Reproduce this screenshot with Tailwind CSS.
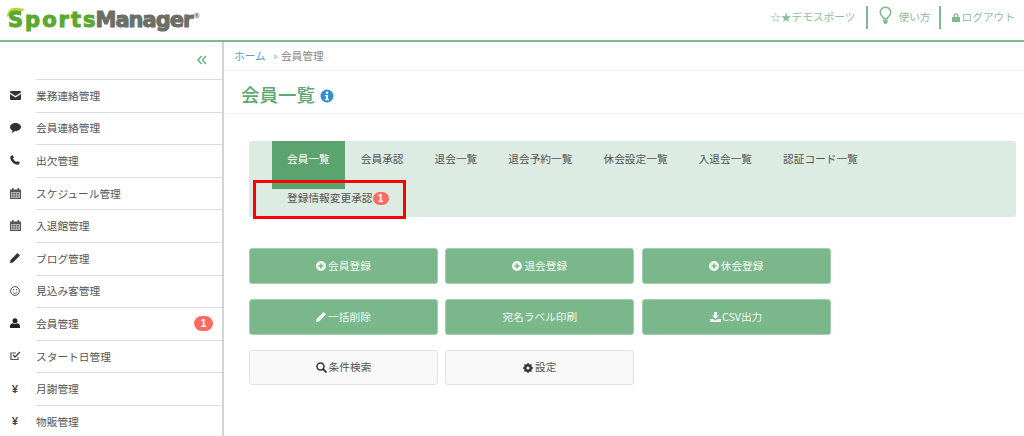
<!DOCTYPE html>
<html lang="ja">
<head>
  <meta charset="UTF-8" />
  <meta name="viewport" content="width=device-width, initial-scale=1.0"/>
  <title>会員一覧 - SportsManager</title>
  <script src="https://cdn.jsdelivr.net/npm/@tailwindcss/browser@4"></script>
</head>
<body class="h-screen overflow-hidden bg-white font-['Noto_Sans_CJK_JP','Noto_Sans',sans-serif] text-[10.7px] text-[#555]">
  <!-- header -->
  <header class="flex h-[42px] items-center justify-between border-b-2 border-[#80b98f]">
    <div class="relative ml-[8px] flex h-[30px] items-center font-['DejaVu_Sans',sans-serif] text-[21px] font-bold leading-none">
      <svg class="absolute left-[-1px] top-[2px]" width="18" height="10" viewBox="0 0 18 10"><path d="M0 10C0 3 5 0 11 1c3 0 5 1 7 1-3 2-5 4-8 5-4 1-7 1-10 3z" fill="#b5d334"/></svg>
      <span class="relative tracking-[2px] text-[#5aa92f] [-webkit-text-stroke:1px_#5aa92f]">Sports</span><span class="ml-[-2px] tracking-[-1px] text-[#6c6e68] [-webkit-text-stroke:1px_#6c6e68]">Manager</span><span class="mb-[8px] ml-[1px] text-[7px] text-[#6c6e68]">®</span>
    </div>
    <div class="mr-[9px] flex items-center pb-[6px] text-[#8dbd9b]">
      <span>☆★デモスポーツ</span>
      <span class="ml-[11px] h-[23px] w-[2px] bg-[#80b98f]"></span>
      <svg class="ml-[11px] mb-[3px]" width="13" height="19" viewBox="0 0 13 19"><path d="M6.5 1.2a5.2 5.2 0 0 0-3 9.4c.6.5.9 1.1 1 1.9h4c.1-.8.4-1.4 1-1.9a5.2 5.2 0 0 0-3-9.4z" fill="none" stroke="#7fb98f" stroke-width="1.5"/><path d="M4.3 13.5h4.4v2.2a2.2 2.2 0 0 1-4.4 0z" fill="#7fb98f"/></svg>
      <span class="ml-[6px] text-[10.7px]">使い方</span>
      <span class="ml-[8px] h-[23px] w-[2px] bg-[#80b98f]"></span>
      <svg class="ml-[11px]" width="8" height="9" viewBox="0 0 8 9"><path d="M1.5 4V2.8a2.5 2.5 0 0 1 5 0V4H8v5H0V4zm1.300 0h2.400V2.800a1.200 1.200 0 0 0-2.400 0z" fill="#7fb98f"/></svg>
      <span class="ml-[2px]">ログアウト</span>
    </div>
  </header>

  <div class="flex h-[394px]">
    <!-- sidebar -->
    <aside class="w-[224px] shrink-0 overflow-hidden border-r-2 border-[#d3d3d8]">
      <div class="flex h-[37px] items-center justify-end pr-[15px]">
        <svg class="mb-[2px]" width="10" height="10" viewBox="0 0 10 10"><path d="M4.500 1 1 5l3.500 4M9 1 5.500 5 9 9" fill="none" stroke="#6fb083" stroke-width="1.500"/></svg>
      </div>
      <nav>
        <a class="flex h-[32.6px] items-center">
          <span class="flex w-[36px] justify-center pr-[6px]"><svg width="11" height="9" viewBox="0 0 11 9"><path d="M1 0h9a1 1 0 0 1 1 1v.6L5.500 5 0 1.600V1a1 1 0 0 1 1-1zM0 3l5.500 3.400L11 3v5a1 1 0 0 1-1 1H1a1 1 0 0 1-1-1z" fill="#333"/></svg></span>
          <span class="flex h-full flex-1 items-center border-t-[1.5px] border-[#ddd]">業務連絡管理</span>
        </a>
        <a class="flex h-[32.6px] items-center">
          <span class="flex w-[36px] justify-center pr-[6px]"><svg width="11" height="10" viewBox="0 0 11 10"><path d="M5.500 0C8.500 0 11 1.700 11 4S8.500 8 5.500 8H5C4 9 2.800 9.600 1.500 10c.6-.8.900-1.500 1-2.400C1 6.900 0 5.600 0 4c0-2.300 2.500-4 5.500-4z" fill="#333"/></svg></span>
          <span class="flex h-full flex-1 items-center border-t-[1.5px] border-[#ddd]">会員連絡管理</span>
        </a>
        <a class="flex h-[32.6px] items-center">
          <span class="flex w-[36px] justify-center pr-[6px]"><svg width="10" height="10" viewBox="0 0 10 10"><path d="M2.500 0 4 2.600 3 3.600c.5 1.300 2 2.900 3.400 3.400l1-1L10 7.500 8.500 9.700C4 10.300-.3 5.500.3 1.500z" fill="#333"/></svg></span>
          <span class="flex h-full flex-1 items-center border-t-[1.5px] border-[#ddd]">出欠管理</span>
        </a>
        <a class="flex h-[32.6px] items-center">
          <span class="flex w-[36px] justify-center pr-[6px]"><svg width="11" height="11" viewBox="0 0 11 11"><path d="M0 1.500h2V0h1.500v1.500h4V0H9v1.500h2V11H0zM1 4v6h9V4zm1 1h1.500v1.200H2zm2.500 0H6v1.200H4.500zM7 5h1.500v1.200H7zM2 7.500h1.500v1.200H2zm2.500 0H6v1.200H4.500zm2.500 0h1.500v1.200H7z" fill="#555" fill-rule="evenodd"/><path d="M1 4h9v6H1z" fill="#555" opacity=".45"/></svg></span>
          <span class="flex h-full flex-1 items-center border-t-[1.5px] border-[#ddd]">スケジュール管理</span>
        </a>
        <a class="flex h-[32.6px] items-center">
          <span class="flex w-[36px] justify-center pr-[6px]"><svg width="11" height="11" viewBox="0 0 11 11"><path d="M0 1.500h2V0h1.500v1.500h4V0H9v1.500h2V11H0zM1 4v6h9V4zm1 1h1.500v1.200H2zm2.500 0H6v1.200H4.500zM7 5h1.500v1.200H7zM2 7.500h1.500v1.200H2zm2.500 0H6v1.200H4.500zm2.500 0h1.500v1.200H7z" fill="#555" fill-rule="evenodd"/><path d="M1 4h9v6H1z" fill="#555" opacity=".45"/></svg></span>
          <span class="flex h-full flex-1 items-center border-t-[1.5px] border-[#ddd]">入退館管理</span>
        </a>
        <a class="flex h-[32.6px] items-center">
          <span class="flex w-[36px] justify-center pr-[6px]"><svg width="10" height="10" viewBox="0 0 10 10"><path d="M7.500 0 10 2.500 3 9.500 0 10l.5-3z" fill="#333"/></svg></span>
          <span class="flex h-full flex-1 items-center border-t-[1.5px] border-[#ddd]">ブログ管理</span>
        </a>
        <a class="flex h-[32.6px] items-center">
          <span class="flex w-[36px] justify-center pr-[6px]"><svg width="10" height="10" viewBox="0 0 10 10"><circle cx="5" cy="5" r="4.400" fill="none" stroke="#555" stroke-width="1"/><circle cx="3.500" cy="3.800" r=".7" fill="#555"/><circle cx="6.500" cy="3.800" r=".7" fill="#555"/><path d="M2.800 6c.5 1 1.300 1.400 2.200 1.400S6.700 7 7.200 6" fill="none" stroke="#555" stroke-width=".8"/></svg></span>
          <span class="flex h-full flex-1 items-center border-t-[1.5px] border-[#ddd]">見込み客管理</span>
        </a>
        <a class="flex h-[32.6px] items-center">
          <span class="flex w-[36px] justify-center pr-[6px]"><svg width="10" height="10" viewBox="0 0 10 10"><circle cx="5" cy="2.700" r="2.500" fill="#222"/><path d="M0 10V8c0-1.500 1.500-2.500 3-2.700.6.400 1.300.6 2 .6s1.400-.2 2-.6C8.500 5.500 10 6.500 10 8v2z" fill="#222"/></svg></span>
          <span class="relative flex h-full flex-1 items-center border-t-[1.5px] border-[#ddd]">会員管理
            <span class="absolute right-[9px] top-[8px] flex h-[15px] w-[19px] items-center justify-center rounded-full bg-[#ff6b63] font-['Liberation_Sans',sans-serif] text-[10px] font-bold text-white">1</span>
          </span>
        </a>
        <a class="flex h-[32.6px] items-center">
          <span class="flex w-[36px] justify-center pr-[6px]"><svg width="11" height="10" viewBox="0 0 11 10"><path d="M8 6v2.500H1V2h5" fill="none" stroke="#555" stroke-width="1.200"/><path d="m3 4 2 2 5-5" fill="none" stroke="#444" stroke-width="1.400"/></svg></span>
          <span class="flex h-full flex-1 items-center border-t-[1.5px] border-[#ddd]">スタート日管理</span>
        </a>
        <a class="flex h-[32.6px] items-center">
          <span class="flex w-[36px] justify-center pr-[6px] font-['Liberation_Sans',sans-serif] font-bold text-[#444]">¥</span>
          <span class="flex h-full flex-1 items-center border-t-[1.5px] border-[#ddd]">月謝管理</span>
        </a>
        <a class="flex h-[32.6px] items-center">
          <span class="flex w-[36px] justify-center pr-[6px] font-['Liberation_Sans',sans-serif] font-bold text-[#444]">¥</span>
          <span class="flex h-full flex-1 items-center border-t-[1.5px] border-[#ddd]">物販管理</span>
        </a>
      </nav>
    </aside>

    <!-- main -->
    <main class="min-w-0 flex-1">
      <div class="flex h-[29px] items-center border-b border-[#eee] pl-[10px] text-[#888]">
        <a class="text-[#5b9fd6]">ホーム</a><span class="ml-[7px] text-[#8dbd9b]">»</span><span class="ml-[3px]">会員管理</span>
      </div>
      <div class="ml-[1px] flex h-[43px] items-center border-b border-[#eee] pl-[16px] pt-[6px]">
        <h1 class="text-[18.5px] font-medium text-[#5fa873]">会員一覧</h1>
        <svg class="ml-[5px] mt-[2px]" width="14" height="14" viewBox="0 0 14 14"><circle cx="7" cy="7" r="6.500" fill="#2f8fd0"/><circle cx="7" cy="3.800" r="1.300" fill="#fff"/><path d="M5 6h3v4h1v1.200H5V10h1V7.200H5z" fill="#fff"/></svg>
      </div>

      <!-- tabs -->
      <div class="relative ml-[25px] mr-[8px] mt-[27px] h-[76px] rounded-[3px] bg-[#ddece2]">
        <ul class="flex gap-x-px pl-[23px]">
          <li class="flex h-[48px] items-center bg-[#5ba46f] px-[15px] pb-[12px] text-white">会員一覧</li>
          <li class="flex h-[48px] items-center px-[15px] pb-[12px]">会員承認</li>
          <li class="flex h-[48px] items-center px-[15px] pb-[12px]">退会一覧</li>
          <li class="flex h-[48px] items-center px-[15px] pb-[12px]">退会予約一覧</li>
          <li class="flex h-[48px] items-center px-[15px] pb-[12px]">休会設定一覧</li>
          <li class="flex h-[48px] items-center px-[15px] pb-[12px]">入退会一覧</li>
          <li class="flex h-[48px] items-center px-[15px] pb-[12px]">認証コード一覧</li>
        </ul>
        <ul class="flex pl-[23px]">
          <li class="flex h-[18px] items-center pl-[15px]">登録情報変更承認<span class="flex h-[13px] w-[16px] items-center justify-center rounded-full bg-[#ff6b63] font-['Liberation_Sans',sans-serif] text-[10px] font-bold text-white">1</span></li>
        </ul>
        <div class="absolute left-[4px] top-[39px] h-[39px] w-[153px] border-[3px] border-[#f00]"></div>
      </div>

      <!-- buttons -->
      <div class="ml-[25px] mt-[31px] grid grid-cols-[189px_189px_189px] gap-x-[7.3px] gap-y-[15px]">
        <button class="flex h-[36px] items-center justify-center gap-[2px] rounded-[3px] border border-[#a3d0b0] bg-[#7ab78a] text-[#f0f7f2]"><svg width="10" height="10" viewBox="0 0 10 10"><path d="M5 0a5 5 0 1 1 0 10A5 5 0 0 1 5 0zM4.200 2.400v1.800H2.400v1.600h1.800v1.800h1.600V5.800h1.800V4.200H5.800V2.400z" fill="#f0f7f2" fill-rule="evenodd"/></svg>会員登録</button>
        <button class="flex h-[36px] items-center justify-center gap-[2px] rounded-[3px] border border-[#a3d0b0] bg-[#7ab78a] text-[#f0f7f2]"><svg width="10" height="10" viewBox="0 0 10 10"><path d="M5 0a5 5 0 1 1 0 10A5 5 0 0 1 5 0zM4.200 2.400v1.800H2.400v1.600h1.800v1.800h1.600V5.800h1.800V4.200H5.800V2.400z" fill="#f0f7f2" fill-rule="evenodd"/></svg>退会登録</button>
        <button class="flex h-[36px] items-center justify-center gap-[2px] rounded-[3px] border border-[#a3d0b0] bg-[#7ab78a] text-[#f0f7f2]"><svg width="10" height="10" viewBox="0 0 10 10"><path d="M5 0a5 5 0 1 1 0 10A5 5 0 0 1 5 0zM4.200 2.400v1.800H2.400v1.600h1.800v1.800h1.600V5.800h1.800V4.200H5.800V2.400z" fill="#f0f7f2" fill-rule="evenodd"/></svg>休会登録</button>
        <button class="flex h-[36px] items-center justify-center gap-[2px] rounded-[3px] border border-[#a3d0b0] bg-[#7ab78a] text-[#f0f7f2]"><svg width="10" height="10" viewBox="0 0 10 10"><path d="M7.500 0 10 2.500 3 9.500 0 10l.5-3z" fill="#f0f7f2"/></svg>一括削除</button>
        <button class="flex h-[36px] items-center justify-center rounded-[3px] border border-[#a3d0b0] bg-[#7ab78a] text-[#f0f7f2]">宛名ラベル印刷</button>
        <button class="flex h-[36px] items-center justify-center gap-[1px] rounded-[3px] border border-[#a3d0b0] bg-[#7ab78a] text-[#f0f7f2]"><svg width="11" height="10" viewBox="0 0 11 10"><path d="M4 0h3v3.500h2L5.500 7 2 3.500h2zM0 7h3l2.500 1.500L8 7h3v3H0z" fill="#f0f7f2"/></svg>CSV出力</button>
        <button class="flex h-[35px] items-center justify-center gap-[2px] rounded-[3px] border border-[#e3e3e3] bg-[#f8f8f8] text-[#555]"><svg width="11" height="11" viewBox="0 0 11 11"><circle cx="4.500" cy="4.500" r="3.500" fill="none" stroke="#333" stroke-width="1.500"/><path d="m7 7 3.500 3.500" stroke="#333" stroke-width="1.800"/></svg>条件検索</button>
        <button class="flex h-[35px] items-center justify-center gap-[2px] rounded-[3px] border border-[#e3e3e3] bg-[#f8f8f8] text-[#555]"><svg width="10" height="10" viewBox="0 0 10 10"><circle cx="5" cy="5" r="2.900" fill="none" stroke="#333" stroke-width="2"/><path d="M5 0v10M0 5h10M1.500 1.500l7 7M8.500 1.500l-7 7" stroke="#333" stroke-width="1.300"/><circle cx="5" cy="5" r="1.500" fill="#f8f8f8"/></svg>設定</button>
      </div>
    </main>
  </div>
</body>
</html>
